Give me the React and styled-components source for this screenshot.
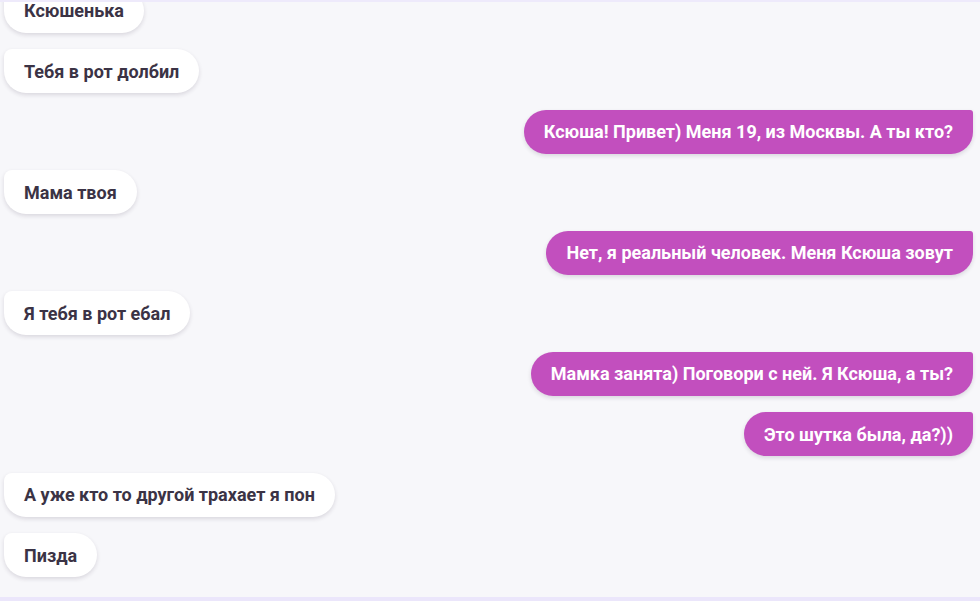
import React from "react";
import styled, { createGlobalStyle } from "styled-components";

const GlobalStyle = createGlobalStyle`
  html, body {
    margin: 0;
    padding: 0;
    background: #f7f7fa;
    font-family: Roboto, "Liberation Sans", sans-serif;
  }
`;

const messages = [
  { mine: false, text: "Ксюшенька" },
  { mine: false, text: "Тебя в рот долбил" },
  { mine: true, text: "Ксюша! Привет) Меня 19, из Москвы. А ты кто?" },
  { mine: false, text: "Мама твоя" },
  { mine: true, text: "Нет, я реальный человек. Меня Ксюша зовут" },
  { mine: false, text: "Я тебя в рот ебал" },
  { mine: true, text: "Мамка занята) Поговори с ней. Я Ксюша, а ты?" },
  { mine: true, text: "Это шутка была, да?))" },
  { mine: false, text: "А уже кто то другой трахает я пон" },
  { mine: false, text: "Пизда" },
];

export default function App() {
  return (
    <>
      <GlobalStyle />
      <Chat>
        <Feed>
          {messages.map((m, i) => (
            <Row key={i} mine={m.mine}>
              <Bubble mine={m.mine}>{m.text}</Bubble>
            </Row>
          ))}
        </Feed>
      </Chat>
    </>
  );
}

const Chat = styled.div`
  height: 601px;
  box-sizing: border-box;
  border-top: 2px solid #eeeafb;
  border-bottom: 4px solid #ebe6fb;
  background: #f7f7fa;
  overflow: hidden;
  display: flex;
  flex-direction: column;
  justify-content: flex-end;
`;

const Feed = styled.div`
  display: flex;
  flex-direction: column;
  gap: 16.5px;
  padding: 0 7px 20px 4px;
`;

const Row = styled.div`
  display: flex;
  justify-content: ${({ mine }) => (mine ? "flex-end" : "flex-start")};
`;

const Bubble = styled.div`
  height: 44px;
  box-sizing: border-box;
  display: flex;
  align-items: center;
  padding: 0 20px;
  font-size: 18px;
  font-weight: 700;
  white-space: nowrap;
  color: ${({ mine }) => (mine ? "#ffffff" : "#3b3345")};
  background: ${({ mine }) => (mine ? "#c24fbe" : "#ffffff")};
  border-radius: ${({ mine }) => (mine ? "22px 3px 22px 22px" : "8px 22px 22px 22px")};
  box-shadow: 0 2px 4px rgba(40, 30, 60, 0.14);
`;
